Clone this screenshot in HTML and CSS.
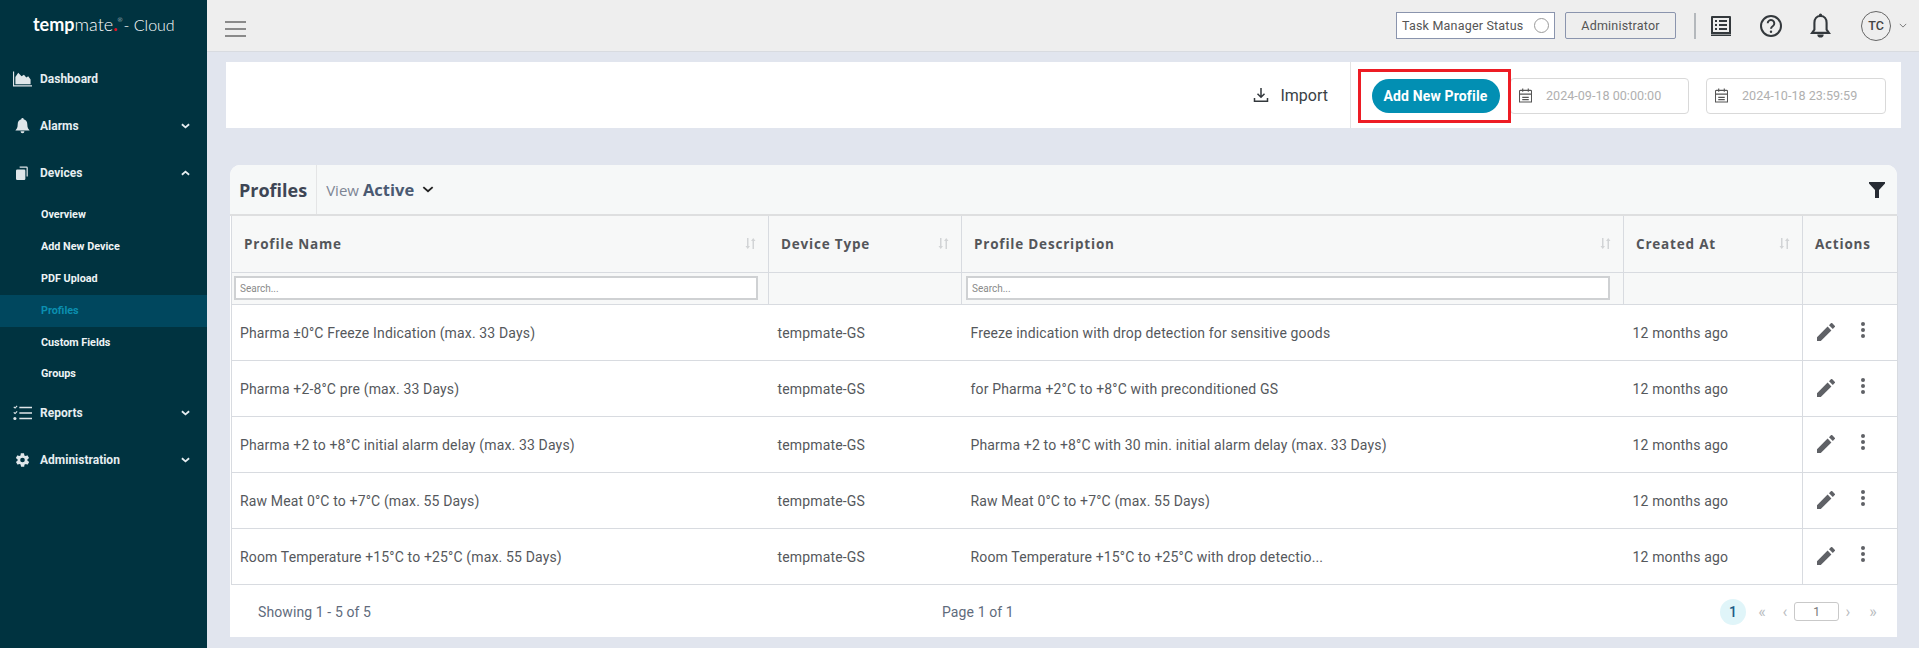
FILE: index.html
```html
<!DOCTYPE html>
<html lang="en">
<head>
    <meta charset="UTF-8">
    <meta name="viewport" content="width=device-width, initial-scale=1.0">
    <title>tempmate Cloud - Profiles</title>
    <link rel="stylesheet" href="styles.css">
</head>
<body>
    <div class="app">
        <aside class="sidebar">
            <div class="logo"><b>temp</b>mate<i>.</i><sup>®</sup><span class="logo-cloud">- Cloud</span></div>
            <nav>
                <a class="nav-item">
                    <svg class="nav-icon" viewBox="0 0 20 16"><path d="M0 0h1.2v14.6H20V16H0z"/><path d="M2.5 13.5V6l3-4.500 3.500 3.500 2.500-1.500 2.500 3 2-1.500 2.500 3.500v5z"/></svg>
                    <span>Dashboard</span>
                </a>
                <a class="nav-item">
                    <svg class="nav-icon" viewBox="0 0 16 18"><path d="M8 0a1.300 1.300 0 0 1 1.300 1.400C12 2 13.400 4.200 13.400 7c0 4 1.200 5.300 2.600 7H0c1.400-1.700 2.600-3 2.600-7 0-2.800 1.400-5 4.100-5.600A1.300 1.300 0 0 1 8 0zM5.800 15h4.400a2.200 2.200 0 0 1-4.400 0z"/></svg>
                    <span>Alarms</span>
                    <svg class="nav-arrow" viewBox="0 0 10 6"><path d="M1 1l4 3.500L9 1"/></svg>
                </a>
                <a class="nav-item">
                    <svg class="nav-icon devices-icon" viewBox="0 0 16 16" preserveAspectRatio="none"><path d="M1.500 4h8.500a1.500 1.500 0 0 1 1.500 1.500v9a1.500 1.500 0 0 1-1.500 1.500H1.500A1.500 1.500 0 0 1 0 14.500v-9A1.500 1.500 0 0 1 1.500 4z"/><path d="M4.500 0.500H13a1.500 1.500 0 0 1 1.500 1.500v10h-1.500V2H4.500z"/></svg>
                    <span>Devices</span>
                    <svg class="nav-arrow" viewBox="0 0 10 6"><path d="M1 5l4-3.500L9 5"/></svg>
                </a>
                <div class="sub-nav">
                    <a class="sub-item">Overview</a>
                    <a class="sub-item">Add New Device</a>
                    <a class="sub-item">PDF Upload</a>
                    <a class="sub-item active">Profiles</a>
                    <a class="sub-item">Custom Fields</a>
                    <a class="sub-item">Groups</a>
                </div>
                <a class="nav-item">
                    <svg class="nav-icon" viewBox="0 0 18 14"><path d="M6 1h12v1.500H6zM6 6.200h12v1.500H6zM6 11.500h12V13H6z"/><circle cx="1.800" cy="12.200" r="1.500"/><path d="M.3 1.600l.9-.8.8.8L3.500 0l.8.700L2 3zM.3 6.800l.9-.8.8.8 1.500-1.600.8.700L2 8.200z"/></svg>
                    <span>Reports</span>
                    <svg class="nav-arrow" viewBox="0 0 10 6"><path d="M1 1l4 3.500L9 1"/></svg>
                </a>
                <a class="nav-item">
                    <svg class="nav-icon" viewBox="0 0 24 24"><path d="M19.400 13c.1-.3.100-.7.100-1s0-.7-.1-1l2.100-1.600c.2-.2.200-.4.100-.6l-2-3.500c-.1-.2-.4-.3-.6-.2l-2.500 1c-.5-.4-1.100-.7-1.700-1l-.4-2.600c0-.3-.2-.5-.5-.5h-4c-.3 0-.5.200-.5.400l-.4 2.700c-.6.200-1.200.6-1.700 1l-2.500-1c-.2-.1-.5 0-.6.200l-2 3.500c-.1.200-.1.500.1.600L4.600 11c0 .3-.1.700-.1 1s0 .7.100 1l-2.100 1.600c-.2.200-.2.400-.1.600l2 3.500c.1.200.4.300.6.200l2.500-1c.5.400 1.100.7 1.700 1l.4 2.600c0 .3.200.5.500.5h4c.3 0 .5-.2.500-.4l.4-2.700c.6-.2 1.200-.6 1.700-1l2.500 1c.2.100.5 0 .6-.2l2-3.500c.1-.2.100-.5-.1-.6zM12 15.500a3.500 3.500 0 1 1 0-7 3.500 3.500 0 0 1 0 7z"/></svg>
                    <span>Administration</span>
                    <svg class="nav-arrow" viewBox="0 0 10 6"><path d="M1 1l4 3.500L9 1"/></svg>
                </a>
            </nav>
        </aside>

        <div class="main">
            <header class="topbar">
                <div class="burger"><span></span><span></span><span></span></div>
                <div class="topbar-right">
                    <div class="task-status">Task Manager Status <span class="status-dot"></span></div>
                    <button class="role-btn">Administrator</button>
                    <span class="topbar-sep"></span>
                    <svg class="top-icon book" viewBox="0 0 20 20"><path class="icon-fill" d="M1 0h18a1 1 0 0 1 1 1v17H0V1a1 1 0 0 1 1-1z"/><path class="icon-bg" d="M2 2h16v14H2z"/><path class="icon-fill" d="M4 4h2v2H4zM4 8h2v2H4zM4 12h2v2H4zM8 4h8v2H8zM8 8h8v2H8zM8 12h8v2H8zM0 18.500h20V20H0z"/></svg>
                    <svg class="top-icon help" viewBox="0 0 24 24"><circle cx="12" cy="12" r="10" class="icon-line"/><path class="icon-line" d="M8.700 9.300a3.300 3.300 0 1 1 5.200 2.700c-1.200.8-1.900 1.500-1.900 2.800"/><circle cx="12" cy="17.800" r="1.200" class="icon-dot"/></svg>
                    <svg class="top-icon bell" viewBox="0 0 20 24"><path class="icon-line" d="M10 2.500c-3.700 0-5.800 2.800-5.800 6.500v6.500L2 18.500h16l-2.200-3V9c0-3.700-2.100-6.500-5.800-6.500z"/><path class="icon-dot" d="M7 20h6a3 3 0 0 1-6 0zM8.500 1.500a1.500 1.500 0 0 1 3 0v1.500h-3z"/></svg>
                    <div class="avatar">TC</div>
                    <svg class="avatar-arrow" viewBox="0 0 10 6"><path d="M1 1l4 4 4-4"/></svg>
                </div>
            </header>

            <div class="action-bar">
                <a class="import-link">
                    <svg viewBox="0 0 16 16"><path d="M8 1v9M4.500 6.800L8 10.300l3.500-3.500M1.500 11v3.300h13V11"/></svg>
                    Import
                </a>
                <div class="action-right">
                    <div class="highlight"><button class="add-btn">Add New Profile</button></div>
                    <div class="date-input date-from">
                        <svg viewBox="0 0 14 16"><path d="M1.500 2.500h11a1 1 0 0 1 1 1V15h-13V3.500a1 1 0 0 1 1-1zM.5 6.500h13M4 .5v3.500M10 .5v3.500M3.500 10h7M3.500 12.500h7"/></svg>
                        <span>2024-09-18 00:00:00</span>
                    </div>
                    <div class="date-input">
                        <svg viewBox="0 0 14 16"><path d="M1.500 2.500h11a1 1 0 0 1 1 1V15h-13V3.500a1 1 0 0 1 1-1zM.5 6.500h13M4 .5v3.500M10 .5v3.500M3.500 10h7M3.500 12.500h7"/></svg>
                        <span>2024-10-18 23:59:59</span>
                    </div>
                </div>
            </div>

            <section class="card">
                <div class="card-head">
                    <h2>Profiles</h2>
                    <div class="view-select">
                        <span class="view-label">View</span> <strong>Active</strong>
                        <svg viewBox="0 0 10 6"><path d="M1 1l4 3.500L9 1"/></svg>
                    </div>
                    <svg class="filter-icon" viewBox="0 0 16 16"><path d="M0 0h16v1.500L10 8v8H6V8L0 1.500z"/></svg>
                </div>
                <table class="profiles">
                    <colgroup>
                        <col class="col-name"><col class="col-type"><col class="col-desc"><col class="col-date"><col class="col-act">
                    </colgroup>
                    <thead>
                        <tr class="head-row">
                            <th><div class="th-inner">Profile Name <svg class="sort" viewBox="0 0 11 11"><path d="M2 0h1.500v8H5L2.750 11 .5 8H2zM7.500 11H9V3h1.500L8.250 0 6 3h1.500z"/></svg></div></th>
                            <th><div class="th-inner">Device Type <svg class="sort" viewBox="0 0 11 11"><path d="M2 0h1.500v8H5L2.750 11 .5 8H2zM7.500 11H9V3h1.500L8.250 0 6 3h1.500z"/></svg></div></th>
                            <th><div class="th-inner">Profile Description <svg class="sort" viewBox="0 0 11 11"><path d="M2 0h1.500v8H5L2.750 11 .5 8H2zM7.500 11H9V3h1.500L8.250 0 6 3h1.500z"/></svg></div></th>
                            <th><div class="th-inner">Created At <svg class="sort" viewBox="0 0 11 11"><path d="M2 0h1.500v8H5L2.750 11 .5 8H2zM7.500 11H9V3h1.500L8.250 0 6 3h1.500z"/></svg></div></th>
                            <th><div class="th-inner">Actions</div></th>
                        </tr>
                        <tr class="search-row">
                            <th><input class="search-name" type="text" placeholder="Search..."></th>
                            <th></th>
                            <th><input class="search-desc" type="text" placeholder="Search..."></th>
                            <th></th>
                            <th></th>
                        </tr>
                    </thead>
                    <tbody>
                        <tr>
                            <td>Pharma ±0°C Freeze Indication (max. 33 Days)</td>
                            <td>tempmate-GS</td>
                            <td>Freeze indication with drop detection for sensitive goods</td>
                            <td>12 months ago</td>
                            <td class="row-actions"><svg class="pencil" viewBox="0 0 18 18"><path d="M0 14.200V18h3.800L14.400 7.400l-3.800-3.800zM17.700 4.100a1 1 0 0 0 0-1.400L15.300.3a1 1 0 0 0-1.400 0L12 2.200 15.800 6z"/></svg><span class="kebab"><i></i><i></i><i></i></span></td>
                        </tr>
                        <tr>
                            <td>Pharma +2-8°C pre (max. 33 Days)</td>
                            <td>tempmate-GS</td>
                            <td>for Pharma +2°C to +8°C with preconditioned GS</td>
                            <td>12 months ago</td>
                            <td class="row-actions"><svg class="pencil" viewBox="0 0 18 18"><path d="M0 14.200V18h3.800L14.400 7.400l-3.800-3.800zM17.700 4.100a1 1 0 0 0 0-1.400L15.300.3a1 1 0 0 0-1.400 0L12 2.200 15.800 6z"/></svg><span class="kebab"><i></i><i></i><i></i></span></td>
                        </tr>
                        <tr>
                            <td>Pharma +2 to +8°C initial alarm delay (max. 33 Days)</td>
                            <td>tempmate-GS</td>
                            <td>Pharma +2 to +8°C with 30 min. initial alarm delay (max. 33 Days)</td>
                            <td>12 months ago</td>
                            <td class="row-actions"><svg class="pencil" viewBox="0 0 18 18"><path d="M0 14.200V18h3.800L14.400 7.400l-3.800-3.800zM17.700 4.100a1 1 0 0 0 0-1.400L15.300.3a1 1 0 0 0-1.400 0L12 2.200 15.800 6z"/></svg><span class="kebab"><i></i><i></i><i></i></span></td>
                        </tr>
                        <tr>
                            <td>Raw Meat 0°C to +7°C (max. 55 Days)</td>
                            <td>tempmate-GS</td>
                            <td>Raw Meat 0°C to +7°C (max. 55 Days)</td>
                            <td>12 months ago</td>
                            <td class="row-actions"><svg class="pencil" viewBox="0 0 18 18"><path d="M0 14.200V18h3.800L14.400 7.400l-3.800-3.800zM17.700 4.100a1 1 0 0 0 0-1.400L15.300.3a1 1 0 0 0-1.400 0L12 2.200 15.800 6z"/></svg><span class="kebab"><i></i><i></i><i></i></span></td>
                        </tr>
                        <tr>
                            <td>Room Temperature +15°C to +25°C (max. 55 Days)</td>
                            <td>tempmate-GS</td>
                            <td>Room Temperature +15°C to +25°C with drop detectio...</td>
                            <td>12 months ago</td>
                            <td class="row-actions"><svg class="pencil" viewBox="0 0 18 18"><path d="M0 14.200V18h3.800L14.400 7.400l-3.800-3.800zM17.700 4.100a1 1 0 0 0 0-1.400L15.300.3a1 1 0 0 0-1.400 0L12 2.200 15.800 6z"/></svg><span class="kebab"><i></i><i></i><i></i></span></td>
                        </tr>
                    </tbody>
                </table>
                <div class="card-foot">
                    <span class="showing">Showing 1 - 5 of 5</span>
                    <span class="page-of">Page 1 of 1</span>
                    <div class="pager">
                        <span class="page-num">1</span>
                        <span class="page-nav first">«</span>
                        <span class="page-nav prev">‹</span>
                        <input class="page-input" type="text" value="1">
                        <span class="page-nav next">›</span>
                        <span class="page-nav last">»</span>
                    </div>
                </div>
            </section>
        </div>
    </div>
</body>
</html>
```

FILE: styles.css
```css
:root {
    --sidebar: #003340;
    --sidebar-active: #00475e;
    --primary: #028fb3;
    --content-bg: #e1e5ee;
    --line: #d8dbe0;
    --text: #55585c;
}
* {
    box-sizing: border-box;
    margin: 0;
    padding: 0;
}
html, body {
    height: 100%;
    overflow: hidden;
}
body {
    font-family: Roboto, sans-serif;
    font-size: 14px;
    color: var(--text);
    background: var(--content-bg);
}
.app {
    display: flex;
    height: 648px;
}

/* sidebar */
.sidebar {
    width: 207px;
    flex-shrink: 0;
    background: var(--sidebar);
    color: #fff;
}
.logo {
    height: 55px;
    padding: 11px 0 0 33px;
    font-family: Lato, sans-serif;
    font-size: 18px;
    font-weight: 300;
    line-height: 26px;
    white-space: nowrap;
}
.logo b {
    font-weight: 700;
}
.logo i {
    color: #e3101f;
    font-style: normal;
    font-weight: 700;
}
.logo sup {
    font-size: 6px;
    line-height: 0;
    vertical-align: 9px;
}
.logo-cloud {
    margin-left: 1px;
    font-size: 16px;
}
.nav-item {
    display: flex;
    align-items: center;
    height: 47px;
    padding-left: 13px;
    font-size: 12px;
    font-weight: 700;
    color: #e6eef1;
}
.nav-item > span {
    flex: 1;
}
.nav-icon {
    width: 19px;
    height: 16px;
    margin-right: 8px;
    fill: #dfe6e9;
}
.devices-icon {
    width: 13px;
    height: 14px;
    margin-left: 3px;
    margin-right: 11px;
}
.nav-arrow {
    width: 9px;
    height: 6px;
    margin-right: 17px;
    fill: none;
    stroke: #e6eef1;
    stroke-width: 2;
}
.sub-nav {
    padding-top: 3px;
}
.sub-item {
    display: flex;
    align-items: center;
    height: 32px;
    padding: 0 0 1px 41px;
    font-size: 10.800px;
    font-weight: 700;
    color: #eef3f5;
}
.sub-item:last-child {
    height: 30px;
}
.sub-item.active {
    background: var(--sidebar-active);
    color: #0b8fb0;
}

/* top bar */
.main {
    flex: 1;
    min-width: 0;
}
.topbar {
    display: flex;
    align-items: center;
    justify-content: space-between;
    height: 52px;
    padding: 0 0 0 18px;
    background: #eeeeee;
    border-bottom: 1px solid var(--line);
}
.burger {
    display: flex;
    flex-direction: column;
    gap: 5px;
    width: 21px;
    margin-top: 7px;
}
.burger span {
    height: 2px;
    background: #8a8a8a;
}
.topbar-right {
    display: flex;
    align-items: center;
    height: 100%;
}
.task-status {
    display: flex;
    align-items: center;
    justify-content: space-between;
    width: 159px;
    height: 27px;
    padding: 0 5px 0 5px;
    font-size: 12.500px;
    letter-spacing: .2px;
    color: #555;
    background: #fff;
    border: 1px solid #8a94ad;
}
.status-dot {
    width: 15px;
    height: 15px;
    border: 1.500px solid #9a9a9a;
    border-radius: 50%;
}
.role-btn {
    width: 111px;
    height: 27px;
    margin-left: 10px;
    font-family: Roboto, sans-serif;
    font-size: 12.500px;
    letter-spacing: .2px;
    color: #555;
    background: #eeeeee;
    border: 1px solid #8a94ad;
    border-radius: 2px;
}
.topbar-sep {
    width: 2px;
    height: 26px;
    margin: 0 15px 0 18px;
    background: #b4b8bc;
}
.top-icon {
    flex-shrink: 0;
}
.book {
    width: 20px;
    height: 20px;
    margin-right: 28px;
}
.help {
    width: 24px;
    height: 24px;
    margin-right: 27px;
}
.bell {
    width: 21px;
    height: 26px;
    margin-right: 30px;
}
.icon-fill, .icon-dot {
    fill: #33383c;
}
.icon-bg {
    fill: #eeeeee;
}
.icon-line {
    fill: none;
    stroke: #33383c;
    stroke-width: 2;
}
.avatar {
    width: 30px;
    height: 30px;
    font-size: 12.500px;
    font-weight: 500;
    line-height: 28px;
    text-align: center;
    color: #444;
    border: 1px solid #666;
    border-radius: 50%;
}
.avatar-arrow {
    width: 8px;
    height: 5px;
    margin: 0 12px 0 8px;
    fill: none;
    stroke: #777;
    stroke-width: 1.200;
}

/* action bar */
.action-bar {
    display: flex;
    align-items: center;
    justify-content: flex-end;
    height: 66px;
    margin: 10px 18px 0 19px;
    background: #fff;
}
.import-link {
    display: flex;
    align-items: center;
    gap: 11px;
    margin-right: 22px;
    font-size: 16px;
    color: #3a3f45;
}
.import-link svg {
    width: 16px;
    height: 16px;
    fill: none;
    stroke: #33383c;
    stroke-width: 1.500;
}
.action-right {
    display: flex;
    align-items: center;
    height: 100%;
    padding: 1px 15px 0 7px;
    border-left: 1px solid #e3e3e3;
}
.highlight {
    display: flex;
    align-items: center;
    justify-content: center;
    width: 153px;
    height: 54px;
    margin-right: -1px;
    border: 3px solid #ed1c24;
    position: relative;
    z-index: 1;
}
.add-btn {
    width: 128px;
    height: 34px;
    margin-left: 2px;
    font-family: Roboto, sans-serif;
    font-size: 14px;
    font-weight: 700;
    letter-spacing: .15px;
    color: #fff;
    background: var(--primary);
    border: none;
    border-radius: 17px;
}
.date-input {
    display: flex;
    align-items: center;
    width: 180px;
    height: 36px;
    padding-left: 8px;
    font-size: 12.600px;
    color: #b0b0b0;
    background: #fff;
    border: 1px solid #d9d9d9;
    border-radius: 4px;
}
.date-from {
    width: 179px;
}
.date-input + .date-input {
    margin-left: 17px;
}
.date-input svg {
    width: 13px;
    height: 15px;
    margin-right: 14px;
    fill: none;
    stroke: #555;
    stroke-width: 1.200;
}

/* card + table */
.card {
    height: 472px;
    margin: 37px 22px 0 23px;
    background: #fff;
    border-radius: 10px 10px 0 0;
}
.card-head {
    display: flex;
    align-items: center;
    height: 51px;
    background: #f6f8f8;
    border-bottom: 2px solid #dedfe0;
    border-radius: 10px 10px 0 0;
}
.card-head h2 {
    display: flex;
    align-items: center;
    height: 100%;
    padding: 0 9px 0 9px;
    font-family: "Open Sans", sans-serif;
    font-size: 18px;
    font-weight: 700;
    color: #3e4655;
    border-right: 1px solid #e4e5e6;
}
.view-select {
    display: flex;
    align-items: center;
    padding-left: 9px;
    font-family: "Open Sans", sans-serif;
    font-size: 15px;
    color: #7d8594;
}
.view-label {
    margin-right: 4px;
}
.view-select strong {
    font-size: 16.500px;
    color: #4a5a72;
}
.view-select svg {
    width: 12px;
    height: 7px;
    margin-left: 8px;
    fill: none;
    stroke: #222;
    stroke-width: 1.600;
}
.filter-icon {
    width: 16px;
    height: 16px;
    margin-left: auto;
    margin-right: 12px;
    fill: #262b33;
}
.profiles {
    width: 1666px;
    margin-left: 1px;
    table-layout: fixed;
    border-collapse: collapse;
}
.col-name { width: 537px; }
.col-type { width: 193px; }
.col-desc { width: 662px; }
.col-date { width: 179px; }
.col-act { width: 95px; }
.profiles th {
    background: #f7f8f8;
    border: 1px solid var(--line);
    border-top: none;
    text-align: left;
}
.head-row th {
    height: 56px;
    padding: 0 12px;
    font-family: "Open Sans", sans-serif;
    font-size: 13.500px;
    font-weight: 700;
    letter-spacing: .8px;
    color: #54565a;
}
.th-inner {
    display: flex;
    align-items: center;
    justify-content: space-between;
}
.sort {
    width: 11px;
    height: 11px;
    fill: #d2d4d6;
}
.search-row th {
    height: 32px;
}
.search-row input {
    display: block;
    height: 24px;
    padding: 0 4px;
    font-family: Roboto, sans-serif;
    font-size: 10px;
    background: #fff;
    border: 2px solid #cfd1d3;
    outline: none;
}
.search-name {
    width: 524px;
    margin-left: 2px;
}
.search-desc {
    width: 644px;
    margin-left: 4px;
}
.search-row input::placeholder {
    color: #8a8a8a;
}
.profiles td {
    height: 56px;
    padding: 1px 9px 0;
    font-size: 14px;
    letter-spacing: .15px;
    color: var(--text);
    border: 1px solid var(--line);
    border-left: none;
    border-right: none;
}
.profiles td:first-child {
    border-left: 1px solid var(--line);
    padding-left: 8px;
}
.profiles td.row-actions {
    padding: 0 0 0 14px;
    border-left: 1px solid var(--line);
    border-right: 1px solid var(--line);
    white-space: nowrap;
}
.pencil {
    width: 18px;
    height: 18px;
    fill: #5f6166;
    vertical-align: middle;
}
.kebab {
    display: inline-flex;
    flex-direction: column;
    gap: 2px;
    margin-left: 26px;
    vertical-align: middle;
    position: relative;
    top: -2px;
}
.kebab i {
    width: 4px;
    height: 4px;
    background: #5f6166;
    border-radius: 50%;
}
.card-foot {
    display: flex;
    align-items: center;
    height: 54px;
    padding: 0 18px 0 28px;
    font-size: 14px;
    letter-spacing: .1px;
    color: #5f6b7c;
}
.showing {
    width: 684px;
}
.pager {
    display: flex;
    align-items: center;
    margin-left: auto;
}
.page-num {
    width: 26px;
    height: 26px;
    margin-right: 10px;
    font-size: 14px;
    font-weight: 500;
    line-height: 26px;
    text-align: center;
    color: #1d5b85;
    background: #e0f5f9;
    border-radius: 50%;
}
.page-nav {
    width: 12px;
    font-size: 16px;
    text-align: center;
    color: #b9bcc0;
}
.prev {
    margin-left: 11px;
}
.page-input {
    width: 45px;
    height: 19px;
    margin: 0 3px;
    font-family: Roboto, sans-serif;
    font-size: 12px;
    text-align: center;
    color: #777;
    border: 1px solid #c9c9c9;
    border-radius: 3px;
    outline: none;
}
.last {
    margin-left: 13px;
}
```
